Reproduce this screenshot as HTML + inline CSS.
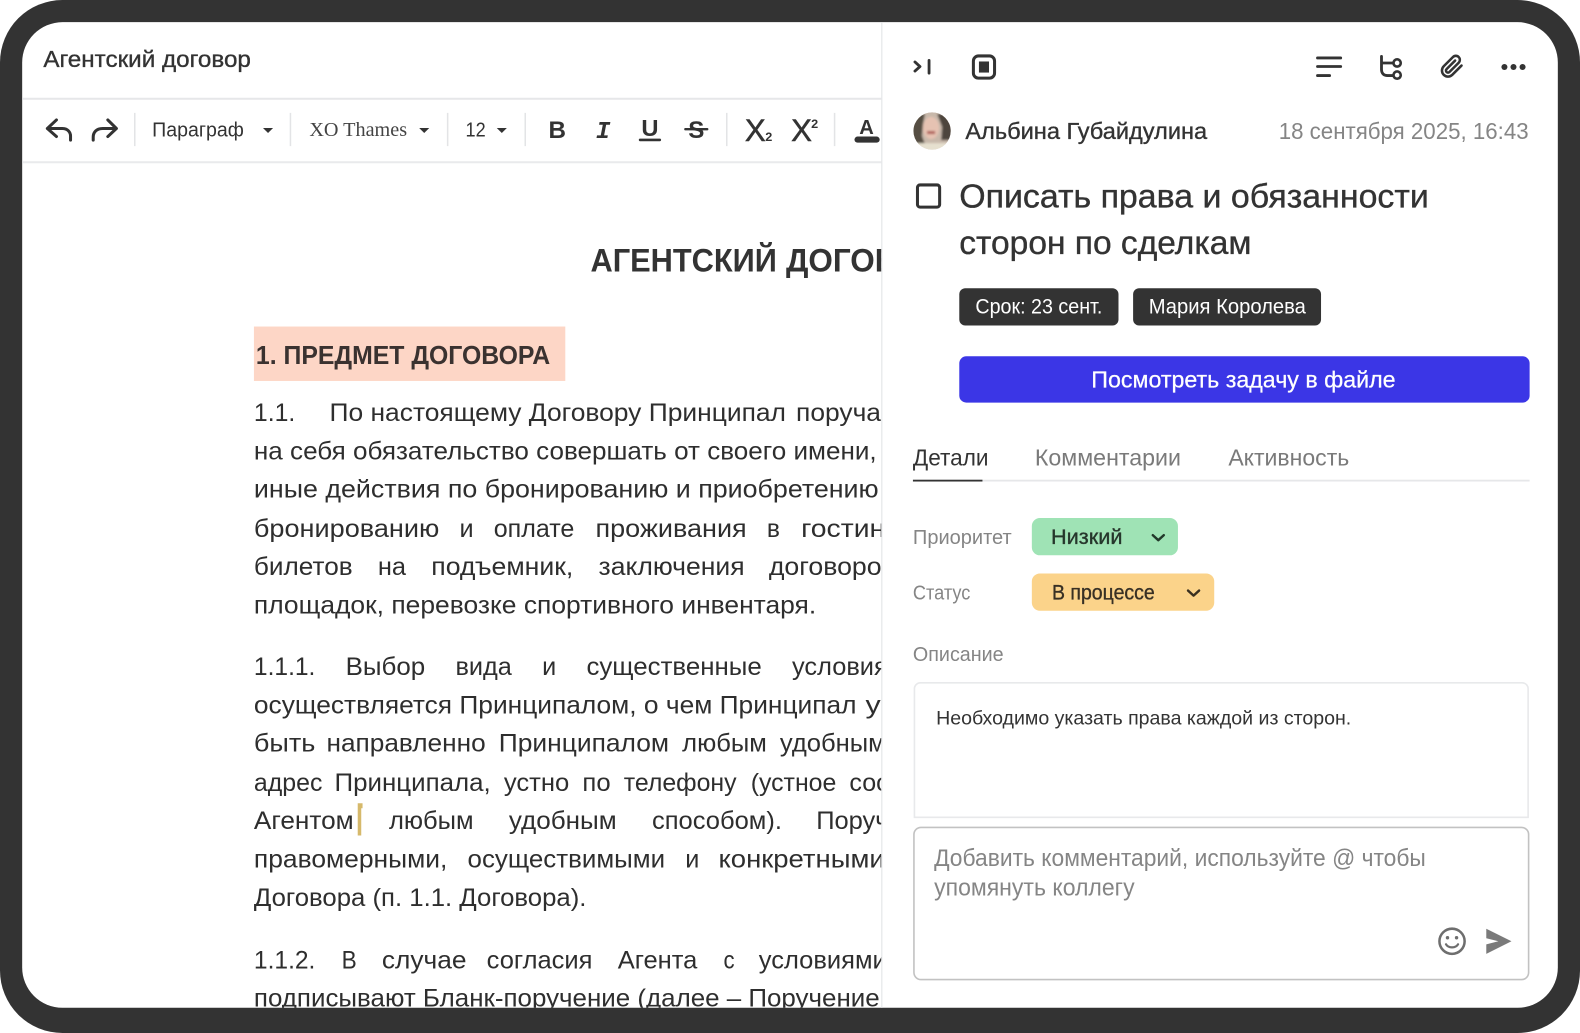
<!DOCTYPE html>
<html lang="ru"><head><meta charset="utf-8"><title>Агентский договор</title>
<style>
html,body{margin:0;padding:0;background:#fff;width:1580px;height:1033px;overflow:hidden}
svg{display:block}
text{font-family:"Liberation Sans","DejaVu Sans",sans-serif;white-space:pre}
.b{font-size:25px;fill:#2e2e2e}
.m{stroke:#333;stroke-width:.35px}
.g{fill:#858585}
.ic{fill:none;stroke:#333;stroke-linecap:round;stroke-linejoin:round}
</style></head><body>
<svg xmlns="http://www.w3.org/2000/svg" width="1580" height="1033" viewBox="0 0 1568 1025" preserveAspectRatio="none">
<defs>
<clipPath id="doc"><rect x="22" y="22" width="853" height="978"/></clipPath>
<clipPath id="ava"><circle cx="925" cy="130" r="18.5"/></clipPath>
<filter id="bl"><feGaussianBlur stdDeviation="1"/></filter>
</defs>
<rect width="1568" height="1025" fill="#fff"/>
<rect width="1568" height="1025" rx="62" fill="#333"/>
<rect x="22" y="22" width="1524" height="978" rx="40" fill="#fff"/>

<g clip-path="url(#doc)">
<text x="43" y="66.500" font-size="23" fill="#333" class="m" textLength="206" lengthAdjust="spacingAndGlyphs">Агентский договор</text>
<rect x="22" y="97" width="853" height="2" fill="#e6e7e9"/>
<rect x="22" y="160" width="853" height="2" fill="#e9eaec"/>
<g fill="#e3e4e6"><rect x="133" y="112" width="1.5" height="33"/><rect x="287.500" y="112" width="1.5" height="33"/><rect x="443.500" y="112" width="1.5" height="33"/><rect x="520.500" y="112" width="1.5" height="33"/><rect x="720.500" y="112" width="1.5" height="33"/><rect x="827.500" y="112" width="1.5" height="33"/></g>
<path class="ic" stroke-width="3" d="M56 119 L47 127.500 L56 135.500 M47 127.500 H62 C67 127.500 70 131 70 135 V139"/>
<path class="ic" stroke-width="3" d="M107 119 L115.500 127.500 L107 135.500 M115.500 127.500 H102 C96 127.500 92.500 131 92.500 136 V139"/>
<text x="151" y="135.500" font-size="20" fill="#333" textLength="91" lengthAdjust="spacingAndGlyphs">Параграф</text>
<path d="M261 127h10l-5 5z" fill="#333"/>
<text x="307" y="135" font-size="20" fill="#444" style="font-family:'Liberation Serif',serif" textLength="97" lengthAdjust="spacingAndGlyphs">XO Thames</text>
<path d="M416 127h10l-5 5z" fill="#333"/>
<text x="462" y="135.500" font-size="20" fill="#333" textLength="20" lengthAdjust="spacingAndGlyphs">12</text>
<path d="M493 127h10l-5 5z" fill="#333"/>
<text x="553" y="137" font-size="24" font-weight="700" fill="#333" text-anchor="middle">B</text>
<text x="598.500" y="137" font-size="24" font-weight="700" font-style="italic" fill="#333" text-anchor="middle" style="font-family:'Liberation Mono',monospace">I</text>
<text x="645" y="135" font-size="23" font-weight="700" fill="#333" text-anchor="middle" textLength="17" lengthAdjust="spacingAndGlyphs">U</text>
<rect x="634" y="137.500" width="22" height="2.600" rx="1" fill="#333"/>
<text x="691" y="137" font-size="24" font-weight="700" fill="#333" text-anchor="middle">S</text>
<rect x="679" y="127" width="24" height="2.400" rx="1" fill="#333"/>
<text x="749.500" y="140" font-size="31" fill="#333" stroke="#333" stroke-width=".5" text-anchor="middle">X</text>
<text x="759.500" y="140" font-size="12" font-weight="700" fill="#333" textLength="7" lengthAdjust="spacingAndGlyphs">2</text>
<text x="795.500" y="140" font-size="31" fill="#333" stroke="#333" stroke-width=".5" text-anchor="middle">X</text>
<text x="805" y="127" font-size="12" font-weight="700" fill="#333" textLength="7" lengthAdjust="spacingAndGlyphs">2</text>
<text x="860" y="133" font-size="20" font-weight="700" fill="#333" text-anchor="middle">A</text>
<rect x="848" y="135.500" width="25" height="6" rx="3" fill="#333"/>

<text x="586" y="269.500" font-size="32" font-weight="700" fill="#333" textLength="185" lengthAdjust="spacingAndGlyphs">АГЕНТСКИЙ</text>
<text x="780" y="269.500" font-size="32" font-weight="700" fill="#333" textLength="155" lengthAdjust="spacingAndGlyphs">ДОГОВОР</text>

<rect x="252" y="324" width="309" height="54" fill="#fdd6c6"/>
<text x="254" y="361" font-size="26" font-weight="700" fill="#3a3230" textLength="292" lengthAdjust="spacingAndGlyphs">1. ПРЕДМЕТ ДОГОВОРА</text>

<g class="b" transform="translate(0 .8)">
<text x="252" y="417" textLength="41" lengthAdjust="spacingAndGlyphs">1.1.</text>
<text x="327" y="417" textLength="453" lengthAdjust="spacingAndGlyphs">По настоящему Договору Принципал</text>
<text x="790" y="417" textLength="110" lengthAdjust="spacingAndGlyphs">поручает</text>
<text x="252" y="455" textLength="618" lengthAdjust="spacingAndGlyphs">на себя обязательство совершать от своего имени,</text>
<text x="252" y="493" textLength="620" lengthAdjust="spacingAndGlyphs">иные действия по бронированию и приобретению</text>
<text x="252" y="532" textLength="184" lengthAdjust="spacingAndGlyphs">бронированию</text>
<text x="456" y="532" textLength="14" lengthAdjust="spacingAndGlyphs">и</text>
<text x="490" y="532" textLength="80" lengthAdjust="spacingAndGlyphs">оплате</text>
<text x="591" y="532" textLength="150" lengthAdjust="spacingAndGlyphs">проживания</text>
<text x="761" y="532" textLength="13" lengthAdjust="spacingAndGlyphs">в</text>
<text x="795" y="532" textLength="145" lengthAdjust="spacingAndGlyphs">гостиницах</text>
<text x="252" y="570" textLength="98" lengthAdjust="spacingAndGlyphs">билетов</text>
<text x="375" y="570" textLength="28" lengthAdjust="spacingAndGlyphs">на</text>
<text x="428" y="570" textLength="141" lengthAdjust="spacingAndGlyphs">подъемник,</text>
<text x="594" y="570" textLength="145" lengthAdjust="spacingAndGlyphs">заключения</text>
<text x="763" y="570" textLength="126" lengthAdjust="spacingAndGlyphs">договоров</text>
<text x="252" y="608" textLength="558" lengthAdjust="spacingAndGlyphs">площадок, перевозке спортивного инвентаря.</text>

<text x="252" y="669" textLength="61" lengthAdjust="spacingAndGlyphs">1.1.1.</text>
<text x="343" y="669" textLength="79" lengthAdjust="spacingAndGlyphs">Выбор</text>
<text x="452" y="669" textLength="56" lengthAdjust="spacingAndGlyphs">вида</text>
<text x="538" y="669" textLength="14" lengthAdjust="spacingAndGlyphs">и</text>
<text x="582" y="669" textLength="174" lengthAdjust="spacingAndGlyphs">существенные</text>
<text x="786" y="669" textLength="95" lengthAdjust="spacingAndGlyphs">условия</text>
<text x="252" y="707" textLength="598" lengthAdjust="spacingAndGlyphs">осуществляется Принципалом, о чем Принципал</text>
<text x="859" y="707" textLength="165" lengthAdjust="spacingAndGlyphs">уведомляет</text>
<text x="252" y="745" textLength="61" lengthAdjust="spacingAndGlyphs">быть</text>
<text x="324" y="745" textLength="158" lengthAdjust="spacingAndGlyphs">направленно</text>
<text x="495" y="745" textLength="169" lengthAdjust="spacingAndGlyphs">Принципалом</text>
<text x="677" y="745" textLength="84" lengthAdjust="spacingAndGlyphs">любым</text>
<text x="774" y="745" textLength="105" lengthAdjust="spacingAndGlyphs">удобным</text>
<text x="252" y="784" textLength="68" lengthAdjust="spacingAndGlyphs">адрес</text>
<text x="332" y="784" textLength="155" lengthAdjust="spacingAndGlyphs">Принципала,</text>
<text x="500" y="784" textLength="65" lengthAdjust="spacingAndGlyphs">устно</text>
<text x="578" y="784" textLength="28" lengthAdjust="spacingAndGlyphs">по</text>
<text x="619" y="784" textLength="112" lengthAdjust="spacingAndGlyphs">телефону</text>
<text x="745" y="784" textLength="85" lengthAdjust="spacingAndGlyphs">(устное</text>
<text x="843" y="784" textLength="130" lengthAdjust="spacingAndGlyphs">сообщение</text>
<text x="252" y="822" textLength="99" lengthAdjust="spacingAndGlyphs">Агентом</text>
<text x="386" y="822" textLength="84" lengthAdjust="spacingAndGlyphs">любым</text>
<text x="505" y="822" textLength="107" lengthAdjust="spacingAndGlyphs">удобным</text>
<text x="647" y="822" textLength="129" lengthAdjust="spacingAndGlyphs">способом).</text>
<text x="810" y="822" textLength="128" lengthAdjust="spacingAndGlyphs">Поручение</text>
<text x="252" y="860" textLength="192" lengthAdjust="spacingAndGlyphs">правомерными,</text>
<text x="464" y="860" textLength="196" lengthAdjust="spacingAndGlyphs">осуществимыми</text>
<text x="680" y="860" textLength="14" lengthAdjust="spacingAndGlyphs">и</text>
<text x="713" y="860" textLength="165" lengthAdjust="spacingAndGlyphs">конкретными</text>
<text x="252" y="898" textLength="330" lengthAdjust="spacingAndGlyphs">Договора (п. 1.1. Договора).</text>

<text x="252" y="960" textLength="61" lengthAdjust="spacingAndGlyphs">1.1.2.</text>
<text x="339" y="960" textLength="15" lengthAdjust="spacingAndGlyphs">В</text>
<text x="379" y="960" textLength="84" lengthAdjust="spacingAndGlyphs">случае</text>
<text x="483" y="960" textLength="105" lengthAdjust="spacingAndGlyphs">согласия</text>
<text x="613" y="960" textLength="79" lengthAdjust="spacingAndGlyphs">Агента</text>
<text x="718" y="960" textLength="11" lengthAdjust="spacingAndGlyphs">с</text>
<text x="753" y="960" textLength="127" lengthAdjust="spacingAndGlyphs">условиями</text>
<text x="252" y="998" textLength="621" lengthAdjust="spacingAndGlyphs">подписывают Бланк-поручение (далее – Поручение</text>
</g>
<path d="M355 797h4.800v5h-1.300v27h-3.500z" fill="#d6b96b"/>
</g>

<rect x="874.500" y="22" width="1.200" height="978" fill="#e6e7e9"/>

<path class="ic" stroke-width="2.800" d="M908 61.500l5 4.500-5 4.500M922 60v12.500"/>
<rect x="966" y="55.500" width="21" height="22" rx="5" fill="none" stroke="#333" stroke-width="3"/>
<rect x="971.500" y="61" width="10" height="11" fill="#333"/>
<path class="ic" stroke-width="2.800" d="M1307.500 57.500h23M1307.500 66h23M1307.500 75h12"/>
<path class="ic" stroke-width="2.800" d="M1371 56v13c0 4 2.500 6 6 6h5.500M1371.500 62.500h11"/>
<circle cx="1386.500" cy="62.500" r="3.600" fill="none" stroke="#333" stroke-width="2.600"/>
<circle cx="1386.500" cy="74.500" r="3.600" fill="none" stroke="#333" stroke-width="2.600"/>
<path class="ic" stroke-width="2.500" transform="translate(1429 54)" d="M21.440 11.050l-9.190 9.190a6 6 0 0 1-8.490-8.490l9.190-9.190a4 4 0 0 1 5.660 5.660l-9.200 9.190a2 2 0 0 1-2.830-2.830l8.490-8.480"/>
<g fill="#333"><circle cx="1493" cy="66.500" r="3"/><circle cx="1502" cy="66.500" r="3"/><circle cx="1511" cy="66.500" r="3"/></g>

<g clip-path="url(#ava)">
<rect x="905" y="110" width="40" height="40" fill="#d9c9bc"/>
<g filter="url(#bl)">
<rect x="905" y="110" width="40" height="40" fill="#c8b8aa"/>
<path d="M905 113h13l-2 10 -1 12 3 8h-13z" fill="#544d42"/>
<path d="M930 113h15v26h-11l1-13z" fill="#4e443e"/>
<ellipse cx="924" cy="127" rx="8" ry="11" fill="#e6c2b2"/>
<path d="M920 130h8v3h-8z" fill="#b0605a"/>
<path d="M910 142h30v8h-30z" fill="#e6e0cf"/>
</g>
</g>
<text x="958" y="138" font-size="23" fill="#333" class="m" textLength="240" lengthAdjust="spacingAndGlyphs">Альбина Губайдулина</text>
<text x="1269" y="138" font-size="23" class="g" textLength="248" lengthAdjust="spacingAndGlyphs">18 сентября 2025, 16:43</text>

<rect x="910.500" y="183.500" width="22" height="22" rx="2.500" fill="none" stroke="#333" stroke-width="3"/>
<text x="952" y="206" font-size="33.500" fill="#333" class="m" textLength="466" lengthAdjust="spacingAndGlyphs">Описать права и обязанности</text>
<text x="952" y="252" font-size="33.500" fill="#333" class="m" textLength="290" lengthAdjust="spacingAndGlyphs">сторон по сделкам</text>

<rect x="952" y="286" width="158" height="37" rx="6" fill="#333"/>
<text x="968" y="311" font-size="21" fill="#fff" textLength="126" lengthAdjust="spacingAndGlyphs">Срок: 23 сент.</text>
<rect x="1124.500" y="286" width="186.500" height="37" rx="6" fill="#333"/>
<text x="1140" y="311" font-size="21" fill="#fff" textLength="156" lengthAdjust="spacingAndGlyphs">Мария Королева</text>

<rect x="952" y="353.500" width="566" height="46" rx="7" fill="#3b36e6"/>
<text x="1083" y="384.500" font-size="23" fill="#fff" stroke="#fff" stroke-width=".25" textLength="302" lengthAdjust="spacingAndGlyphs">Посмотреть задачу в файле</text>

<text x="906" y="462" font-size="23" fill="#333" textLength="75" lengthAdjust="spacingAndGlyphs">Детали</text>
<text x="1027" y="462" font-size="23" fill="#7a7a7a" textLength="145" lengthAdjust="spacingAndGlyphs">Комментарии</text>
<text x="1219" y="462" font-size="23" fill="#7a7a7a" textLength="120" lengthAdjust="spacingAndGlyphs">Активность</text>
<rect x="906" y="476" width="612" height="1.800" fill="#e6e7e9"/>
<rect x="906" y="476" width="69" height="1.800" fill="#333"/>

<text x="906" y="540" font-size="20" class="g" textLength="98" lengthAdjust="spacingAndGlyphs">Приоритет</text>
<rect x="1024" y="514" width="145" height="37" rx="8" fill="#9fe3b5"/>
<text x="1043" y="540" font-size="21" fill="#22392a" class="m" textLength="71" lengthAdjust="spacingAndGlyphs">Низкий</text>
<path d="M1144 531l5.500 5 5.500-5" fill="none" stroke="#22392a" stroke-width="2.400" stroke-linecap="round" stroke-linejoin="round"/>

<text x="906" y="595" font-size="20" class="g" textLength="57" lengthAdjust="spacingAndGlyphs">Статус</text>
<rect x="1024" y="569" width="181" height="37" rx="8" fill="#fbd38a"/>
<text x="1044" y="595" font-size="21" fill="#3a3020" class="m" textLength="102" lengthAdjust="spacingAndGlyphs">В процессе</text>
<path d="M1179 586l5.500 5 5.500-5" fill="none" stroke="#3a3020" stroke-width="2.400" stroke-linecap="round" stroke-linejoin="round"/>

<text x="906" y="656" font-size="20" class="g" textLength="90" lengthAdjust="spacingAndGlyphs">Описание</text>
<path d="M907.500 811V684a6 6 0 0 1 6-6.500h597a6 6 0 0 1 6 6.500v127z" fill="#fff" stroke="#e8e9eb" stroke-width="1.600"/>
<text x="929" y="719" font-size="19.500" fill="#333" textLength="412" lengthAdjust="spacingAndGlyphs">Необходимо указать права каждой из сторон.</text>

<rect x="907" y="821" width="610" height="151" rx="7" fill="#fff" stroke="#c2c2c2" stroke-width="1.600"/>
<text x="927" y="859.500" font-size="24" class="g" textLength="488" lengthAdjust="spacingAndGlyphs">Добавить комментарий, используйте @ чтобы</text>
<text x="927" y="888.500" font-size="24" class="g" textLength="199" lengthAdjust="spacingAndGlyphs">упомянуть коллегу</text>
<circle cx="1441" cy="934" r="12.500" fill="none" stroke="#6e6e6e" stroke-width="2.500"/>
<circle cx="1436.500" cy="930.500" r="1.700" fill="#6e6e6e"/><circle cx="1445.500" cy="930.500" r="1.700" fill="#6e6e6e"/>
<path d="M1435 937c2.500 4 9.500 4 12 0" fill="none" stroke="#6e6e6e" stroke-width="2.200" stroke-linecap="round"/>
<path d="M1475 921.500l25 12.500-25 12.500v-9.500l12-3-12-3z" fill="#7a7a7a"/>
</svg>
</body></html>
